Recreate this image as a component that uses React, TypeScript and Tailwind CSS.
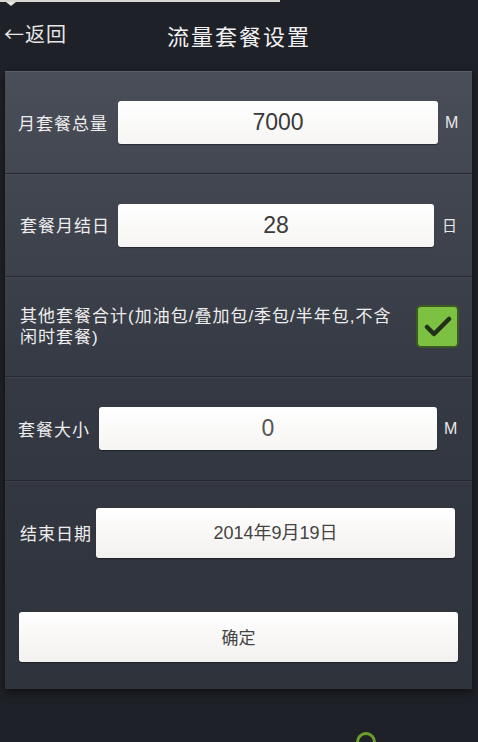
import React from "react";

const font = { fontFamily: '"Noto Sans CJK SC", "Noto Sans", sans-serif' };
const mixed = { fontFamily: '"Liberation Sans", "Noto Sans CJK SC", sans-serif' };

function Field({ value, className }: { value: string; className: string }) {
  return (
    <div
      className={`flex h-[43px] items-center justify-center rounded-[3px] bg-gradient-to-b from-white to-[#f6f5f3] text-[23px] text-[#3a3a3a] shadow-[0_1px_1px_rgba(0,0,0,0.4)] ${className}`}
      style={mixed}
    >
      {value}
    </div>
  );
}

function Row({ children, className = "" }: { children: React.ReactNode; className?: string }) {
  return (
    <div className={`flex items-center border-b border-[#262930] shadow-[0_1px_0_rgba(255,255,255,0.04)] ${className}`}>
      {children}
    </div>
  );
}

export default function App() {
  return (
    <div className="relative h-[742px] w-[478px] overflow-hidden bg-[#1f2128] text-white" style={font}>
      {/* status strip */}
      <div className="relative h-[2px] w-[280px] bg-[#d8d8d0]">
        <div className="absolute left-[6px] top-[2px] h-0 w-0 border-l-[5px] border-r-[5px] border-t-[4px] border-l-transparent border-r-transparent border-t-[#e8e8e0]" />
      </div>

      {/* header */}
      <div className="relative flex h-[69px] items-center">
        <div className="absolute left-[4px] top-[22px] flex items-center text-[20px] leading-none tracking-[1px] text-[#e6e6e6]">
          <span>←</span>
          <span>返回</span>
        </div>
        <div className="w-full pb-[4px] text-center text-[22px] leading-none tracking-[2px] text-[#f2f2f2]">
          流量套餐设置
        </div>
      </div>

      {/* settings panel */}
      <div className="mx-[5px] w-[467px] border-t border-[#5a5e68] bg-gradient-to-b from-[#4a4e59] via-[#353943] to-[#2f333c] shadow-[0_4px_8px_rgba(0,0,0,0.5)]">
        <Row className="h-[102px]">
          <span className="ml-[13px] w-[100px] text-[17px] tracking-[1px] text-[#eeeeee]">月套餐总量</span>
          <Field value="7000" className="w-[320px]" />
          <span className="ml-[7px] text-[16px] text-[#e8e8e8]" style={mixed}>M</span>
        </Row>
        <Row className="h-[103px]">
          <span className="ml-[15px] w-[98px] text-[17px] tracking-[1px] text-[#eeeeee]">套餐月结日</span>
          <Field value="28" className="w-[316px]" />
          <span className="ml-[8px] text-[15px] text-[#e8e8e8]">日</span>
        </Row>
        <Row className="h-[100px]">
          <div
            className="ml-[15px] flex w-[391px] flex-col text-[17px] leading-[21px] tracking-[1px] text-[#eeeeee]"
            style={mixed}
          >
            <span>其他套餐合计(加油包/叠加包/季包/半年包,不含</span>
            <span>闲时套餐)</span>
          </div>
          <div className="ml-[5px] flex h-[43px] w-[43px] items-center justify-center rounded-[5px] border-2 border-[#3c5a22] bg-[#7dc142]">
            <svg width="28" height="24" viewBox="0 0 28 24">
              <path d="M3 12 L10 19 L25 4" fill="none" stroke="#22301a" strokeWidth="4.5" strokeLinecap="round" strokeLinejoin="round" />
            </svg>
          </div>
        </Row>
        <Row className="h-[104px]">
          <span className="ml-[13px] w-[81px] text-[17px] tracking-[1px] text-[#eeeeee]">套餐大小</span>
          <Field value="0" className="w-[338px] text-[#555]" />
          <span className="ml-[7px] text-[16px] text-[#e8e8e8]" style={mixed}>M</span>
        </Row>
        <Row className="h-[104px] border-b-0 shadow-none">
          <span className="ml-[15px] w-[76px] text-[17px] tracking-[1px] text-[#eeeeee]">结束日期</span>
          <div className="flex h-[50px] w-[359px] items-center justify-center rounded-[3px] bg-gradient-to-b from-white to-[#f3f1ee] text-[18px] text-[#444] shadow-[0_1px_1px_rgba(0,0,0,0.4)]">
            <span style={mixed}>2014年9月19日</span>
          </div>
        </Row>
        <div className="flex h-[104px] items-start justify-center pt-[27px]">
          <div className="flex h-[50px] w-[439px] items-center justify-center rounded-[3px] bg-gradient-to-b from-white to-[#f3f1ee] text-[17px] text-[#444] shadow-[0_1px_1px_rgba(0,0,0,0.4)]">
            确定
          </div>
        </div>
      </div>

      {/* partial badge at the bottom edge */}
      <div className="absolute left-[356px] top-[732px] h-[20px] w-[20px] rounded-full border-[3px] border-[#6aa02a]" />
    </div>
  );
}
